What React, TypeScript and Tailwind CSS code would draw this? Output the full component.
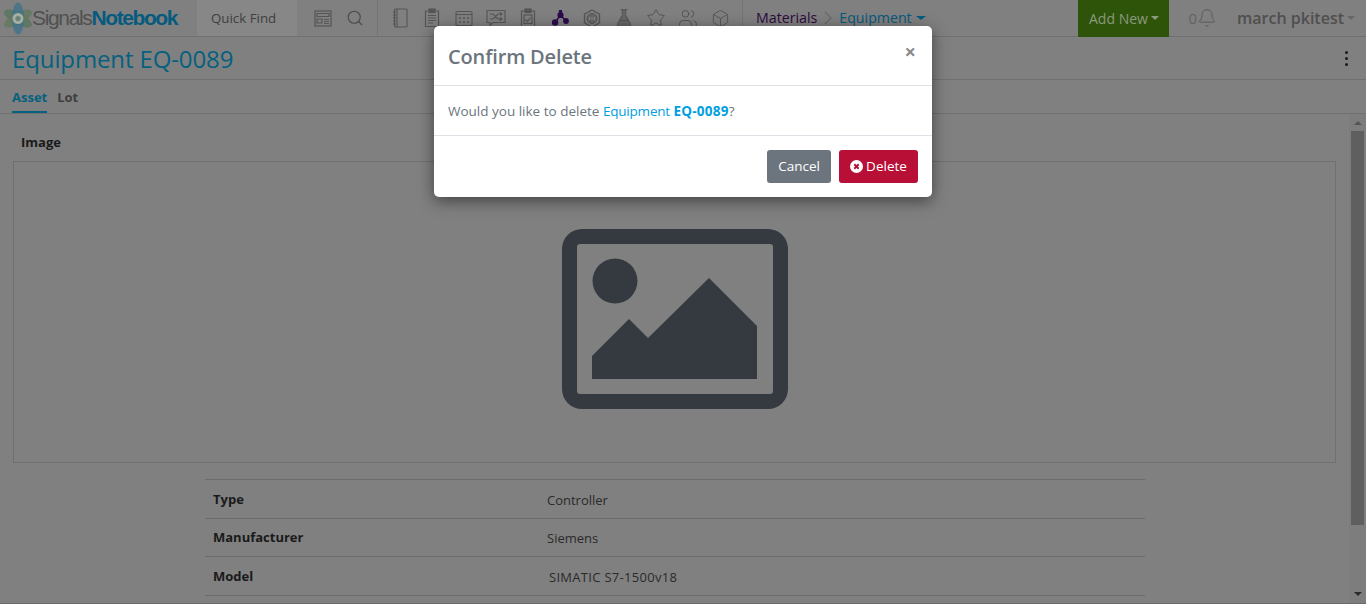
import { Bell, Box, FlaskConical, Search, Star, Users } from "lucide-react";

const font = "font-['Open_Sans','Liberation_Sans',sans-serif]";

const rows = [
  { label: "Type", value: "Controller", extra: "" },
  { label: "Manufacturer", value: "Siemens", extra: "" },
  { label: "Model", value: "SIMATIC S7-1500v18", extra: "pl-[2px] tracking-[0.3px]" },
];

function LogoMark() {
  return (
    <svg width="32" height="33" viewBox="0 0 32 33" className="shrink-0 blur-[0.4px]">
      <ellipse cx="16" cy="16.5" rx="15.5" ry="6" fill="#5a7660" opacity="0.85" transform="rotate(28 16 16.5)" />
      <ellipse cx="16" cy="16.5" rx="15.5" ry="6" fill="#64785f" opacity="0.85" transform="rotate(-28 16 16.5)" />
      <ellipse cx="16" cy="16.5" rx="6" ry="16" fill="#3f7289" opacity="0.8" />
      <circle cx="16" cy="16.5" r="5.5" fill="#a5aea0" />
      <circle cx="16" cy="16.5" r="2.6" fill="#6d8078" />
    </svg>
  );
}

function Layout() {
  return (
    <svg width="18" height="17" viewBox="0 0 18 17" fill="none" stroke="#555" strokeWidth="1.2">
      <rect x="1" y="1" width="16" height="15" />
      <path d="M3 3.5h12v3H3zM3 9h5v4H3zM10 9.5h5M10 11.5h5M10 13.5h5" />
    </svg>
  );
}

function Notebook() {
  return (
    <svg width="16" height="20" viewBox="0 0 16 20" fill="none" stroke="#555" strokeWidth="1.1">
      <rect x="2.5" y="1" width="12.5" height="18" rx="1" />
      <path d="M5 1v18M1 4h3M1 7h3M1 10h3M1 13h3M1 16h3" />
    </svg>
  );
}

function ClipLines() {
  return (
    <svg width="16" height="20" viewBox="0 0 16 20" fill="none" stroke="#555" strokeWidth="1.2">
      <path d="M5 3H1.5v15.5h13V3H11" />
      <rect x="5" y="1" width="6" height="3.5" fill="#555" />
      <path d="M4 7.5h8M4 10h8M4 12.5h8M4 15h5" />
    </svg>
  );
}

function ClipCheck() {
  return (
    <svg width="16" height="20" viewBox="0 0 16 20" fill="none" stroke="#555" strokeWidth="1.2">
      <path d="M5 3H1.5v15.5h13V3H11" />
      <rect x="5" y="1" width="6" height="3.5" fill="#555" />
      <rect x="4" y="7" width="8" height="8.5" />
      <path d="M5.5 11.5l2 2 3-4" />
    </svg>
  );
}

function Calendar() {
  return (
    <svg width="18" height="17" viewBox="0 0 18 17" fill="none" stroke="#555" strokeWidth="1.1">
      <rect x="1" y="1.5" width="16" height="14" rx="1" />
      <path d="M1 4.5h16" />
      <path d="M4 8h2M8 8h2M12 8h2M4 12h2M8 12h2M12 12h2" strokeWidth="1.6" />
    </svg>
  );
}

function ShuffleBubble() {
  return (
    <svg width="20" height="18" viewBox="0 0 20 18" fill="none" stroke="#555" strokeWidth="1.1">
      <path d="M1 1.5h18v12H7l-3 3v-3H1z" />
      <path d="M4 5h3l5 5h3M4 10h3l5-5h3M14 3.5L16 5l-2 1.5M14 8.5l2 1.5-2 1.5" />
    </svg>
  );
}

function Molecule() {
  return (
    <svg width="17" height="16" viewBox="0 0 17 16" stroke="#2c0a4f" strokeWidth="1.4" fill="#2c0a4f">
      <path d="M8.5 5L3 12.5M8.5 5L14 11" />
      <circle cx="8.5" cy="5" r="2.4" />
      <circle cx="3" cy="12.5" r="2.6" />
      <circle cx="14" cy="11" r="2.2" />
      <circle cx="8.5" cy="1.3" r="1" />
    </svg>
  );
}

function Hexagon() {
  return (
    <svg width="18" height="19" viewBox="0 0 18 19" fill="none" stroke="#555">
      <path d="M9 1l7.5 4.2v8.6L9 18l-7.5-4.2V5.2z" strokeWidth="1.3" />
      <circle cx="9" cy="9.5" r="5" fill="#666" strokeWidth="1" />
      <path d="M6.5 8v3M9 8v3M11.5 8v3" stroke="#999" strokeWidth="0.8" />
    </svg>
  );
}

function Cell({ children }: { children: React.ReactNode }) {
  return <div className="flex h-[36px] w-[32px] items-center justify-center">{children}</div>;
}

function NavBar() {
  const ico = "shrink-0 text-[#555]";
  return (
    <div className="flex h-[37px] items-center border-b border-[#707070]">
      <div className="ml-[2px] flex w-[195px] shrink-0 items-center">
        <LogoMark />
        <span className="ml-[-2px] font-['Liberation_Sans',sans-serif] text-[21px] font-bold">
          <span className="font-normal tracking-[-1.35px] text-[#505050]">Signals</span>
          <span className="tracking-[-1.4px] text-[#055a7d]">Notebook</span>
        </span>
      </div>
      <div className="flex h-[36px] w-[100px] shrink-0 items-center bg-[#878787] pl-[14px] pt-[2px] text-[13.3px] text-[#404040]">
        Quick Find
      </div>
      <div className="ml-[17px] flex h-[36px] items-center gap-[14px] border-r border-[#747474] pr-[13px]">
        <Layout />
        <Search size={18} strokeWidth={1.5} className="shrink-0 text-[#4a4a4a]" />
      </div>
      <div className="ml-[6px] flex items-center">
        <Cell><Notebook /></Cell>
        <Cell><ClipLines /></Cell>
        <Cell><Calendar /></Cell>
        <Cell><ShuffleBubble /></Cell>
        <Cell><ClipCheck /></Cell>
        <Cell><Molecule /></Cell>
        <Cell><Hexagon /></Cell>
        <Cell><FlaskConical size={20} strokeWidth={1.2} fill="#666" className={ico} /></Cell>
        <Cell><Star size={20} strokeWidth={1.2} className={ico} /></Cell>
        <Cell><Users size={20} strokeWidth={1.2} className={ico} /></Cell>
        <Cell><Box size={19} strokeWidth={1.2} className={ico} /></Cell>
      </div>
      <div className="ml-[6px] flex h-[36px] items-center border-l border-[#747474] pl-[13px] text-[14.2px]">
        <span className="text-[#2c0a3f]">Materials</span>
        <svg width="10" height="14" viewBox="0 0 10 14" fill="none" stroke="#6a6a6a" strokeWidth="1.4" className="mx-[6px]">
          <path d="M2 1l6 6-6 6" />
        </svg>
        <span className="text-[#055a7d]">Equipment</span>
        <span className="ml-[4px] h-0 w-0 border-x-[5px] border-t-[4px] border-x-transparent border-t-[#055a7d]" />
      </div>
      <div className="ml-auto flex items-center">
        <div className="flex h-[37px] w-[91px] items-center justify-center bg-[#2e540a] text-[14px] text-[#8a9a7c]">
          Add New
          <span className="ml-[3px] h-0 w-0 border-x-[4px] border-t-[4px] border-x-transparent border-t-[#8a9a7c]" />
        </div>
        <span className="ml-[19px] text-[15px] text-[#626262]">0</span>
        <Bell size={20} strokeWidth={1.2} className="text-[#5a5a5a]" />
        <span className="ml-[20px] text-[16px] font-semibold text-[#4f4f4f]">march pkitest</span>
        <span className="ml-[3px] mr-[11px] h-0 w-0 border-x-[4px] border-t-[4px] border-x-transparent border-t-[#666]" />
      </div>
    </div>
  );
}

function ImagePlaceholder() {
  return (
    <svg width="226" height="180" viewBox="0 0 226 180">
      <path
        fillRule="evenodd"
        fill="#343a40"
        d="M20 0H206A20 20 0 0 1 226 20V160A20 20 0 0 1 206 180H20A20 20 0 0 1 0 160V20A20 20 0 0 1 20 0ZM18 15A3 3 0 0 0 15 18V162A3 3 0 0 0 18 165H208A3 3 0 0 0 211 162V18A3 3 0 0 0 208 15Z"
      />
      <circle cx="53" cy="52" r="22.5" fill="#343a40" />
      <path d="M30 150V127L67 90L86 109L147 49L195 97V150Z" fill="#343a40" />
    </svg>
  );
}

function Modal() {
  return (
    <div className="absolute left-[434px] top-[26px] w-[498px] rounded-[5px] bg-white shadow-[0_4px_16px_rgba(0,0,0,0.5)]">
      <div className="flex h-[60px] items-start justify-between border-b border-[#dee2e6] pl-[14px] pr-[16px]">
        <h5 className="mt-[16px] text-[20px] font-semibold leading-[30px] tracking-[-0.15px] text-[#6c757d]">Confirm Delete</h5>
        <span className="mt-[14px] text-[20px] font-bold leading-[24px] text-[#8a8a8a]">×</span>
      </div>
      <div className="flex h-[49px] items-center px-[14px] pt-[2px] text-[13.5px] text-[#6c757d]">
        <span>
          Would you like to delete <span className="tracking-[-0.2px] text-[#00a0df]">Equipment</span>{" "}
          <span className="font-bold tracking-[0.25px] text-[#00a0df]">EQ-0089</span>?
        </span>
      </div>
      <div className="flex h-[62px] items-center justify-end gap-[8px] border-t border-[#dee2e6] pr-[14px]">
        <button className="h-[33px] w-[64px] rounded-[3px] bg-[#6c757d] text-[13.5px] font-medium text-white">Cancel</button>
        <button className="flex h-[33px] w-[79px] items-center justify-center gap-[3px] rounded-[3px] bg-[#b80f36] text-[13.5px] font-medium text-white">
          <svg width="13" height="13" viewBox="0 0 13 13">
            <circle cx="6.5" cy="6.5" r="6.5" fill="white" />
            <path d="M4.3 4.3l4.4 4.4M8.7 4.3l-4.4 4.4" stroke="#b80f36" strokeWidth="2" />
          </svg>
          Delete
        </button>
      </div>
    </div>
  );
}

export default function App() {
  return (
    <div className={`relative h-[604px] w-[1366px] overflow-hidden border-b border-[#6a6a6a] bg-[#808080] ${font}`}>
      <NavBar />
      <div className="flex h-[43px] items-center justify-between border-b border-[#707070] pl-[12px] pr-[18px] pt-[1px]">
        <h1 className="text-[24px] leading-none tracking-[-0.12px] text-[#05617f]">Equipment EQ-0089</h1>
        <div className="flex flex-col gap-[3px]">
          <span className="h-[3px] w-[3px] rounded-full bg-[#1a1a1a]" />
          <span className="h-[3px] w-[3px] rounded-full bg-[#1a1a1a]" />
          <span className="h-[3px] w-[3px] rounded-full bg-[#1a1a1a]" />
        </div>
      </div>
      <div className="flex h-[34px] items-end gap-[10px] border-b border-[#707070] pl-[12px] text-[13px] font-bold">
        <span className="border-b-[2px] border-[#05617f] pb-[4px] text-[#05617f]">Asset</span>
        <span className="pb-[6px] text-[#3e3e3e]">Lot</span>
      </div>
      <div className="flex h-[489px]">
        <div className="flex-1 pl-[13px] pr-[13px]">
          <div className="pl-[8px] pt-[19px] text-[13px] font-bold leading-[18px] text-[#1a1a1a]">Image</div>
          <div className="mt-[10px] flex h-[302px] items-center justify-center border border-[#707070] pt-[14px]">
            <ImagePlaceholder />
          </div>
          <div className="ml-[192px] mt-[16px] w-[940px] border-t border-[#6c6c6c]">
            {rows.map((row) => (
              <div key={row.label} className="flex h-[38.5px] items-center border-b border-[#6c6c6c] text-[13px]">
                <span className="w-[342px] pl-[8px] pt-[1px] font-bold text-[#1a1a1a]">{row.label}</span>
                <span className={`pt-[3px] text-[#2a2a2a] ${row.extra}`}>{row.value}</span>
              </div>
            ))}
          </div>
        </div>
        <div className="flex w-[17px] shrink-0 flex-col items-center bg-[#7d7d7d]">
          <span className="mt-[7px] h-0 w-0 border-x-[4px] border-b-[4px] border-x-transparent border-b-[#555]" />
          <div className="mt-[6px] h-[394px] w-[13px] bg-[#5f5f5f]" />
          <span className="mb-[7px] mt-auto h-0 w-0 border-x-[4px] border-t-[4px] border-x-transparent border-t-[#2a2a2a]" />
        </div>
      </div>
      <Modal />
    </div>
  );
}
